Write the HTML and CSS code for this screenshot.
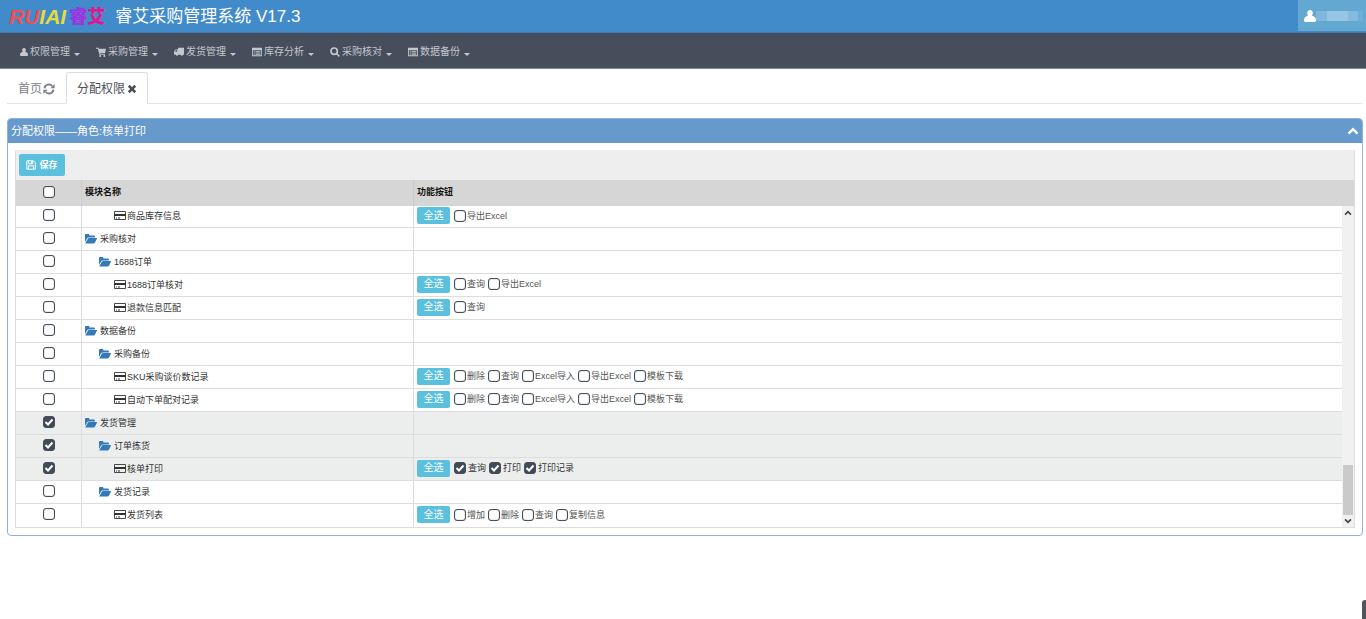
FILE: index.html
```html
<!DOCTYPE html>
<html lang="zh-CN">
<head>
<meta charset="utf-8">
<title>睿艾采购管理系统</title>
<link rel="stylesheet" href="styles.css">
</head>
<body>
<svg class="sprite" aria-hidden="true">
  <symbol id="i-user" viewBox="0 0 12 12"><path d="M6 0a2.800 3 0 0 1 2.400 4.600L8.200 6c2.200.2 3.800 1.500 3.800 4.200 0 1.200-.6 1.800-1.800 1.800H1.800C.6 12 0 11.400 0 10.200 0 7.500 1.600 6.200 3.800 6l-.2-1.400A2.800 3 0 0 1 6 0z"/></symbol>
  <symbol id="i-cart" viewBox="0 0 12 12"><path d="M0 .8h2.800l.6 1.400H12l-1 5H5l.2 1h5.600v1.200H4.200L2.100 2.200H0zM5 9.500a1.200 1.200 0 1 1 0 2.400 1.200 1.200 0 0 1 0-2.400zm5 0a1.200 1.200 0 1 1 0 2.400 1.200 1.200 0 0 1 0-2.400z"/></symbol>
  <symbol id="i-truck" viewBox="0 0 12 12"><path d="M4.800 1H12v8h-.8a1.700 1.700 0 0 1-3.300.2H5.100A1.700 1.700 0 0 1 1.800 9H0V5.500L1.800 3h3zM1.200 5.600h2.600V4H2.300z" fill-rule="evenodd"/></symbol>
  <symbol id="i-list" viewBox="0 0 12 12"><path d="M0 1h12v10H0zM1 4v6h10V4zM2 5h1.200v1H2zm2.200 0H10v1H4.200zM2 6.600h1.200v1H2zm2.200 0H10v1H4.200zM2 8.200h1.200v1H2zm2.200 0H10v1H4.200z" fill-rule="evenodd"/></symbol>
  <symbol id="i-search" viewBox="0 0 12 12"><circle cx="5" cy="5" r="3.800" fill="none" stroke="currentColor" stroke-width="2"/><path d="M7.300 8.500l1.200-1.200 3.300 3.300-1.300 1.300z"/></symbol>
  <symbol id="i-refresh" viewBox="0 0 12 12"><path d="M1.500 5.300A4.400 4.400 0 0 1 9.200 3M10.500 6.700A4.400 4.400 0 0 1 2.800 9" fill="none" stroke="currentColor" stroke-width="1.900"/><path d="M11.600.9v4.300H7.300zM.4 11.100V6.800h4.300z"/></symbol>
  <symbol id="i-close" viewBox="0 0 12 12"><path d="M1 3.200L3.200 1 6 3.800 8.800 1 11 3.200 8.200 6 11 8.800 8.800 11 6 8.200 3.200 11 1 8.800 3.800 6z"/></symbol>
  <symbol id="i-up" viewBox="0 0 12 12"><path d="M1.500 8.700L6 4.200l4.500 4.500" fill="none" stroke="currentColor" stroke-width="2.400"/></symbol>
  <symbol id="i-scroll" viewBox="0 0 12 12"><path d="M2.500 8L6 4.500 9.500 8" fill="none" stroke="currentColor" stroke-width="2"/></symbol>
  <symbol id="i-save" viewBox="0 0 12 12"><path d="M1 1h8l2.200 2.200V11H1zM3 1v3.500h5V1M3 11V7h6v4" fill="none" stroke="currentColor" stroke-width="1.200"/><path d="M6 1.500h1.500V4H6z"/></symbol>
  <symbol id="i-folder" viewBox="0 0 12 12"><path d="M0 9V2.200C0 1.500.4 1 1.100 1h2.300c.6 0 1 .5 1 1v.4h4.400c.7 0 1.100.5 1.100 1.100v1H3.500c-.7 0-1.100.3-1.500.9zM.2 10.500l2.600-4.800c.3-.5.6-.7 1.100-.7h7.500c.6 0 .7.4.4.9L9.900 9.800c-.3.5-.7.7-1.200.7z"/></symbol>
  <symbol id="i-card" viewBox="0 0 12 12"><path d="M.5 1.500h11v8H.5z" fill="none" stroke="currentColor" stroke-width=".9"/><path d="M0 4h12v2H0zM2 7.500h1v1H2zm2 0h2v1H4z"/></symbol>
</svg>

<header class="topbar">
  <div class="brand">
    <span class="logo"><i class="logo-red">RU</i><i class="logo-yellow">IAI</i><b class="logo-purple">睿</b><b class="logo-pink">艾</b></span>
    <h1 class="brand-title">睿艾采购管理系统 V17.3</h1>
  </div>
  <button class="account" type="button" aria-label="账户"><svg class="icon icon-lg"><use href="#i-user"/></svg><span class="account-name"></span></button>
</header>

<nav class="menu">
  <a class="menu-item" href="#"><svg class="icon icon-sm"><use href="#i-user"/></svg>权限管理<span class="caret"></span></a>
  <a class="menu-item" href="#"><svg class="icon"><use href="#i-cart"/></svg>采购管理<span class="caret"></span></a>
  <a class="menu-item" href="#"><svg class="icon"><use href="#i-truck"/></svg>发货管理<span class="caret"></span></a>
  <a class="menu-item" href="#"><svg class="icon"><use href="#i-list"/></svg>库存分析<span class="caret"></span></a>
  <a class="menu-item" href="#"><svg class="icon"><use href="#i-search"/></svg>采购核对<span class="caret"></span></a>
  <a class="menu-item" href="#"><svg class="icon"><use href="#i-list"/></svg>数据备份<span class="caret"></span></a>
</nav>

<div class="tabs">
  <a class="tab" href="#">首页<svg class="icon icon-lg"><use href="#i-refresh"/></svg></a>
  <a class="tab tab-active" href="#">分配权限<svg class="icon"><use href="#i-close"/></svg></a>
</div>

<main class="panel">
  <div class="panel-head">
    <h2 class="panel-title">分配权限——角色:核单打印</h2>
    <button class="collapse" type="button" aria-label="收起"><svg class="icon icon-lg"><use href="#i-up"/></svg></button>
  </div>
  <div class="panel-body">
    <div class="grid-box">
      <div class="toolbar"><button class="save" type="button"><svg class="icon"><use href="#i-save"/></svg>保存</button></div>
      <table class="grid grid-head">
        <colgroup><col class="col-check"><col class="col-name"><col></colgroup>
        <thead><tr><th class="check-cell"><input class="box" type="checkbox" aria-label="全部"></th><th>模块名称</th><th>功能按钮</th></tr></thead>
      </table>
      <div class="scroller">
        <table class="grid">
          <colgroup><col class="col-check"><col class="col-name"><col></colgroup>
          <tbody id="rows"></tbody>
        </table>
        <div class="scrollbar"><svg class="icon"><use href="#i-scroll"/></svg><span class="thumb"></span><svg class="icon icon-down"><use href="#i-scroll"/></svg></div>
      </div>
    </div>
  </div>
</main>
<div class="side-handle"></div>
<script src="rows.js"></script>
</body>
</html>
```

FILE: styles.css
```css
* { box-sizing: border-box; }
body {
  margin: 0;
  min-height: 100vh;
  background: #fff;
  color: #333;
  font: 9px/12px "Liberation Sans", "Noto Sans CJK SC", sans-serif;
}
button { font: inherit; border: 0; padding: 0; margin: 0; cursor: pointer; }
a { text-decoration: none; color: inherit; }
.sprite { position: absolute; width: 0; height: 0; }
.icon { width: 10px; height: 10px; fill: currentColor; flex: none; }
.icon-sm { width: 8px; }
.icon-lg { width: 12px; height: 12px; }

.topbar {
  display: flex;
  justify-content: space-between;
  align-items: flex-start;
  height: 33px;
  background: #428bca;
  border-bottom: 1px solid #3b80bd;
}
.brand { display: flex; align-items: center; gap: 10px; height: 33px; padding-left: 9px; }
.logo { display: flex; align-items: center; font-size: 21px; line-height: 24px; font-weight: bold; }
.logo-red { color: #f04e50; }
.logo-yellow { color: #e8dc3c; }
.logo-purple { color: #a030e0; font-size: 18px; padding-left: 3px; }
.logo-pink { color: #e01890; font-size: 18px; }
.brand-title { margin: 0; color: #fff; font-size: 17px; line-height: 24px; font-weight: normal; }
.account {
  display: flex;
  align-items: center;
  width: 68px;
  height: 31px;
  padding-left: 6px;
  background: #62a8d1;
  color: #fff;
}
.account-name {
  width: 47px;
  height: 10px;
  background: linear-gradient(90deg, #82b7dc 0 11px, #98c5e3 11px 32px, #85b9dd 32px 42px, #70aed5 42px);
}

.menu {
  display: flex;
  gap: 16px;
  height: 36px;
  padding: 2px 0 0 20px;
  background: #454e5a;
  border-bottom: 1px solid #85898f;
  color: #c3c8ce;
  font-size: 10px;
}
.menu-item { display: flex; align-items: center; gap: 2px; }
.caret { border: 3px solid transparent; border-top-color: currentColor; border-bottom: 0; margin: 5px 0 0 2px; }

.tabs {
  display: flex;
  height: 32px;
  margin: 3px 4px 0 7px;
  border-bottom: 1px solid #e4e4e4;
  font-size: 12px;
  color: #7b8087;
}
.tab { display: flex; align-items: center; gap: 1px; height: 32px; padding: 1px 11px 0; }
.tab-active {
  gap: 2px;
  padding: 1px 10px 0;
  background: #fff;
  border: 1px solid #ddd;
  border-bottom-color: #fff;
  border-radius: 3px 3px 0 0;
  color: #4a4f55;
}

.panel { margin: 14px 3px 0 7px; border: 1px solid #8eb2da; border-radius: 4px; }
.panel-head {
  display: flex;
  align-items: center;
  justify-content: space-between;
  height: 24px;
  padding: 0 3px;
  background: #6699cc;
  border-radius: 3px 3px 0 0;
  color: #fff;
}
.panel-title { margin: 0; font-size: 11px; line-height: 16px; font-weight: normal; }
.collapse { display: flex; background: none; color: #fff; }
.panel-body { padding: 7px; }
.grid-box { border: 1px solid #ddd; border-top-color: #eee; }
.toolbar { display: flex; align-items: center; height: 29px; padding: 0 3px 1px; background: #eee; }
.save {
  display: flex;
  align-items: center;
  justify-content: center;
  gap: 3px;
  width: 46px;
  height: 22px;
  background: #5bc0de;
  border-radius: 2px;
  color: #fff;
  font-weight: bold;
}

.grid { width: 100%; table-layout: fixed; border-collapse: separate; border-spacing: 0; }
.col-check { width: 66px; }
.col-name { width: 332px; }
.grid th, .grid td {
  height: 23px;
  padding: 0 3px;
  border-right: 1px solid #ddd;
  border-bottom: 1px solid #ddd;
  text-align: left;
  vertical-align: middle;
}
.grid th:last-child, .grid td:last-child { border-right: 0; }
.grid-head { background: #d6d6d6; }
.grid-head th { height: 26px; padding-bottom: 2px; border-bottom: 0; border-color: #ccc; color: #111; }
.grid tbody tr:first-child td { height: 22px; }
.grid tbody tr:last-child td { border-bottom: 0; }
.grid .check-cell { padding-bottom: 3px; text-align: center; }
.row-on { background: #eceeee; }
.box {
  appearance: none;
  display: block;
  flex: none;
  width: 12px;
  height: 12px;
  margin: 0;
  border: 1px solid #454e5a;
  border-radius: 3px;
  background: #fff;
  box-shadow: inset 0 0 1px #454e5a;
}
.check-cell .box { margin: 0 auto; }
.box:checked {
  background: #414b58 url("data:image/svg+xml,%3Csvg xmlns='http://www.w3.org/2000/svg' viewBox='0 0 10 10'%3E%3Cpath d='M1.500 5l2.500 2.500L8.500 2.500' fill='none' stroke='white' stroke-width='2'/%3E%3C/svg%3E") center / 10px 10px no-repeat;
}
.name { display: flex; align-items: center; gap: 2px; }
.name .icon { width: 12px; height: 12px; }
.icon-folder { color: #337ab7; }
.level-1 { gap: 3px; }
.level-2 { gap: 3px; padding-left: 14px; }
.level-3 { gap: 1px; padding-left: 29px; }
.grid .level-3 { margin-bottom: 1px; }
.actions { display: flex; align-items: center; gap: 3px; padding-bottom: 2px; }
.pick-all {
  width: 33px;
  height: 17px;
  margin-right: 1px;
  background: #5bc0de;
  border-radius: 2px;
  color: #fff;
  font-size: 10px;
}
.option { display: flex; align-items: center; gap: 1px; color: #555; white-space: nowrap; }
.row-on .option { gap: 2px; color: #333; }

.scroller { display: flex; }
.scroller .grid { flex: 1; }
.scrollbar {
  display: flex;
  flex-direction: column;
  align-items: center;
  justify-content: space-between;
  width: 12px;
  padding: 2px 0 1px;
  background: #f1f1f1;
  color: #444;
}
.thumb { width: 10px; height: 50px; margin: auto 0 1px; background: #cacaca; }
.icon-down { transform: rotate(180deg); }
.side-handle {
  position: fixed;
  right: 0;
  bottom: 0;
  width: 4px;
  height: 19px;
  background: #50555f;
  border-radius: 3px 0 0 0;
}
```

FILE: rows.js
```js
const rows = [
  [3, "商品库存信息", ["导出Excel"]],
  [1, "采购核对"],
  [2, "1688订单"],
  [3, "1688订单核对", ["查询", "导出Excel"]],
  [3, "退款信息匹配", ["查询"]],
  [1, "数据备份"],
  [2, "采购备份"],
  [3, "SKU采购谈价数记录", ["删除", "查询", "Excel导入", "导出Excel", "模板下载"]],
  [3, "自动下单配对记录", ["删除", "查询", "Excel导入", "导出Excel", "模板下载"]],
  [1, "发货管理", [], true],
  [2, "订单拣货", [], true],
  [3, "核单打印", ["查询", "打印", "打印记录"], true],
  [2, "发货记录"],
  [3, "发货列表", ["增加", "删除", "查询", "复制信息"]]
];

document.getElementById("rows").innerHTML = rows.map(([level, name, options = [], on = false], i) => {
  const checked = on ? " checked" : "";
  const icon = level === 3 ? "card" : "folder";
  const actions = options.length
    ? `<div class="actions"><button class="pick-all" type="button">全选</button>${options.map(text =>
        `<label class="option"><input class="box" type="checkbox"${checked}>${text}</label>`).join("")}</div>`
    : "";
  return `<tr class="${on ? "row-on" : ""}">
    <td class="check-cell"><input class="box" type="checkbox" id="module-${i}"${checked}></td>
    <td><label class="name level-${level}" for="module-${i}"><svg class="icon icon-${icon}"><use href="#i-${icon}"/></svg>${name}</label></td>
    <td>${actions}</td></tr>`;
}).join("");
```
